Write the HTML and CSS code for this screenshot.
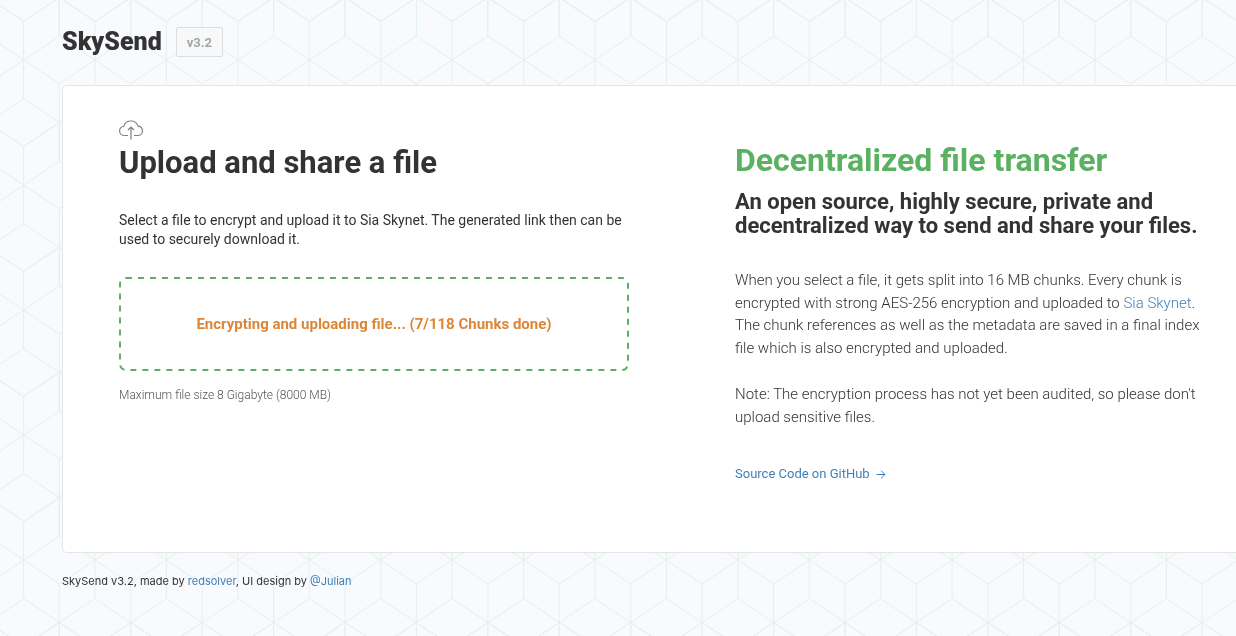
FILE: index.html
```html
<!DOCTYPE html>
<html lang="en">
<head>
<meta charset="utf-8">
<title>SkySend</title>
<link rel="stylesheet" href="styles.css">
</head>
<body>
<svg class="backdrop" aria-hidden="true">
  <defs>
    <pattern id="cubes" width="500" height="125" patternUnits="userSpaceOnUse">
      <svg width="500" height="125" viewBox="0 0 1400 350" preserveAspectRatio="none">
        <defs>
          <g id="star"><path d="M0-108V108M-100-67L100 67M-100 67L100-67"/></g>
          <g id="row"><use href="#star" x="-134"/><use href="#star" x="66"/><use href="#star" x="266"/><use href="#star" x="466"/><use href="#star" x="666"/><use href="#star" x="866"/><use href="#star" x="1066"/><use href="#star" x="1266"/><use href="#star" x="1466"/></g>
        </defs>
        <g class="cube-lines"><use href="#row" y="168"/><use href="#row" x="-100" y="-7"/><use href="#row" x="100" y="-7"/><use href="#row" x="-100" y="343"/></g>
      </svg>
    </pattern>
  </defs>
  <rect width="100%" height="100%" fill="url(#cubes)"/>
</svg>
<div class="page">
  <header class="header">
    <span class="brand">SkySend</span>
    <span class="version">v3.2</span>
  </header>
  <main class="card">
    <section class="upload">
      <svg class="cloud" viewBox="0 0 24 20" aria-hidden="true"><path d="M9 15.500H5.500C2.500 15.500.6 13.400.6 11c0-2.400 1.800-4.300 4.200-4.500C5.600 3.300 8.500 1 12 1c3.400 0 6.200 2.100 7.100 5.200 2.600.4 4.300 2.200 4.300 4.700 0 2.600-1.900 4.600-4.600 4.600H15M12 19.500V7M9 10l3-3 3 3"/></svg>
      <h1 class="title">Upload and share a file</h1>
      <p class="intro">Select a file to encrypt and upload it to Sia Skynet. The generated link then can be used to securely download it.</p>
      <div class="dropzone" role="status">
        <svg class="dashes" aria-hidden="true"><rect width="100%" height="100%" rx="6"/></svg>
        Encrypting and uploading file... (7/118 Chunks done)
      </div>
      <p class="limit">Maximum file size 8 Gigabyte (8000 MB)</p>
    </section>
    <section class="about">
      <h2 class="title title-green">Decentralized file transfer</h2>
      <h3 class="subtitle">An open source, highly secure, private and decentralized way to send and share your files.</h3>
      <p class="text">When you select a file, it gets split into 16 MB chunks. Every chunk is encrypted with strong AES-256 encryption and uploaded to <a href="#">Sia Skynet</a>. The chunk references as well as the metadata are saved in a final index file which is also encrypted and uploaded.</p>
      <p class="text">Note: The encryption process has not yet been audited, so please don't upload sensitive files.</p>
      <a class="source" href="#">Source Code on GitHub <svg class="arrow" viewBox="0 0 10 10" aria-hidden="true"><path d="M.5 5.500h8.500M5.200 1.700L9 5.500 5.200 9.300"/></svg></a>
    </section>
  </main>
  <footer class="footer">SkySend v3.2, made by <a href="#">redsolver</a>, UI design by <a href="#">@Julian</a></footer>
</div>
</body>
</html>
```
FILE: styles.css
```css
* { box-sizing: border-box; }

body {
  margin: 0;
  min-height: 100vh;
  background: #f8fafd;
  color: #333;
  font-family: Roboto, "Liberation Sans", sans-serif;
}

h1, h2, h3, p { margin: 0; }

a { color: #3f7fb8; text-decoration: none; }

.backdrop {
  position: fixed;
  inset: 0;
  z-index: -1;
  width: 100%;
  height: 100%;
}

.cube-lines { fill: none; stroke: #e5f1ee; stroke-width: 3; }

.page { padding: 27px 0 0 62px; }

.header {
  display: flex;
  align-items: center;
  gap: 14px;
  height: 30px;
  margin-bottom: 28px;
}

.brand { font-size: 25px; line-height: 30px; font-weight: 900; }

.version {
  height: 30px;
  padding: 0 10px;
  border: 1px solid #ddd;
  border-radius: 2px;
  background: #f7f8f9;
  color: #a6a6a6;
  font-size: 13px;
  line-height: 30px;
  font-weight: 700;
}

.card {
  display: grid;
  grid-template-columns: 510fr 477fr;
  gap: 106px;
  min-height: 468px;
  padding: 34px 24px 48px 56px;
  border: 1px solid #e3e5e7;
  border-right: 0;
  border-radius: 5px 0 0 5px;
  background: #fff;
}

.cloud {
  display: block;
  width: 24px;
  height: 20px;
  fill: none;
  stroke: #808080;
  stroke-width: 1.2;
}

.title { font-size: 32px; line-height: 40px; font-weight: 700; }

.title-green { color: #5bb162; }

.upload .title { margin: 3px 0 28px; font-size: 31px; }

.intro { font-size: 14px; line-height: 19px; }

.dropzone {
  position: relative;
  margin: 28px 0 14px;
  padding: 38px 16px;
  color: #dc8637;
  font-size: 15px;
  line-height: 18px;
  font-weight: 700;
  text-align: center;
}

.dashes {
  position: absolute;
  inset: 1px;
  width: calc(100% - 2px);
  height: calc(100% - 2px);
  overflow: visible;
  fill: none;
  stroke: #5fae68;
  stroke-width: 2;
  stroke-dasharray: 6 6;
}

.limit { color: #555; font-size: 12px; line-height: 20px; font-weight: 300; }

.about { padding-top: 20px; }

.subtitle {
  margin: 10px 0 31px;
  font-size: 22px;
  line-height: 24px;
  font-weight: 700;
}

.text {
  margin-bottom: 24px;
  font-size: 15px;
  line-height: 1.5;
  font-weight: 300;
}

.source {
  display: flex;
  align-items: center;
  gap: 6px;
  margin-top: 36px;
  font-size: 13px;
  line-height: 20px;
}

.arrow {
  width: 10px;
  height: 10px;
  fill: none;
  stroke: currentColor;
}

.footer {
  margin-top: 20px;
  font-family: Inter, Roboto, sans-serif;
  font-size: 11px;
  line-height: 16px;
}
```
